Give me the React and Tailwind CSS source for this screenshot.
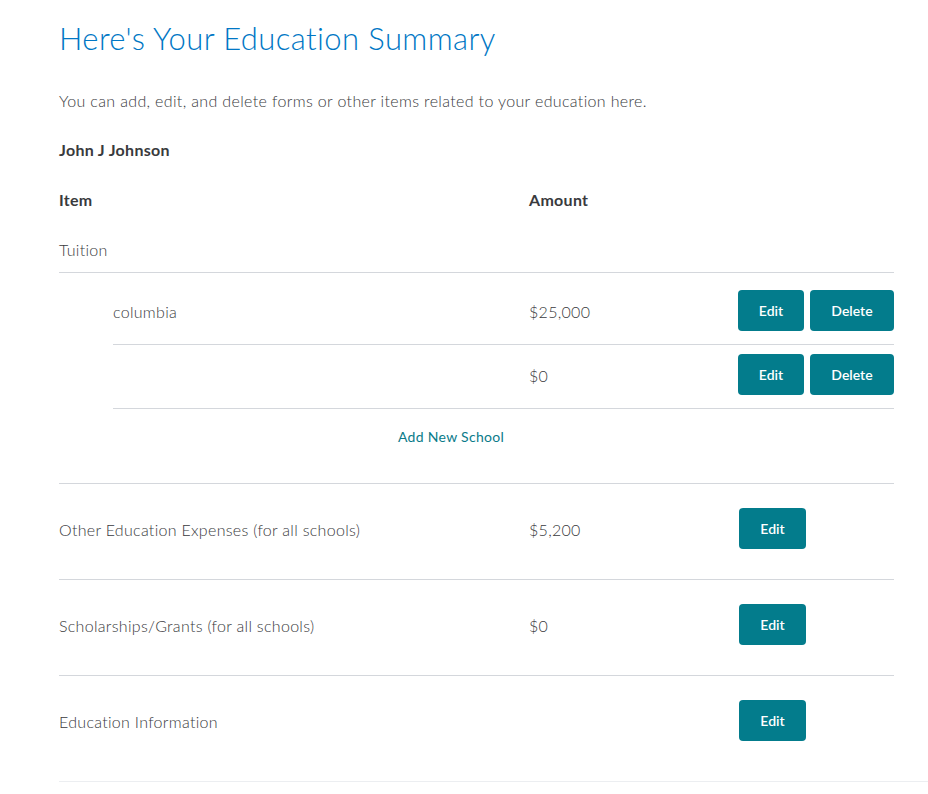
import React from 'react';

const schools = [
  { name: 'columbia', amount: '$25,000' },
  { name: '', amount: '$0' },
];

const others = [
  { label: 'Other Education Expenses (for all schools)', amount: '$5,200' },
  { label: 'Scholarships/Grants (for all schools)', amount: '$0' },
  { label: 'Education Information', amount: '' },
];

function Btn({ children, className = '' }) {
  return (
    <button className={`h-[41px] rounded-[4px] bg-[#037c8c] text-white text-[14px] font-semibold ${className}`}>
      {children}
    </button>
  );
}

export default function App() {
  return (
    <div className="min-h-[794px] bg-white text-[#393a3d] font-['Lato',sans-serif]">
      <div className="pl-[59px] pt-[18px]">
        {/* Header */}
        <h1 className="text-[31px] leading-[40px] font-light text-[#0077c5] tracking-[0.4px]">Here's Your Education Summary</h1>
        <p className="mt-[33px] text-[16px] leading-[20px] font-light tracking-[0.35px]">
          You can add, edit, and delete forms or other items related to your education here.
        </p>
        <div className="mt-[29px] text-[16px] leading-[20px] font-bold tracking-[0.3px]">John J Johnson</div>

        <div className="w-[835px]">
          {/* Column headings */}
          <div className="mt-[30px] grid grid-cols-[470px_1fr] text-[16px] leading-[20px] font-bold tracking-[0.3px]">
            <span>Item</span>
            <span>Amount</span>
          </div>

          {/* Tuition */}
          <div className="mt-[30px] pb-[12px] text-[16px] leading-[20px] font-light tracking-[0.3px]">Tuition</div>
          <div className="border-t border-[#d4d7dc]">
            <div className="pl-[54px] pt-[8px]">
              {schools.map((s, i) => (
                <div key={i} className="flex items-center border-b border-[#d4d7dc] pt-[9px] pb-[13px]">
                  <span className="w-[416px] pt-[2px] text-[16px] font-light tracking-[0.3px]">{s.name}</span>
                  <span className="flex-1 pt-[2px] text-[16px] font-light tracking-[0.3px]">{s.amount}</span>
                  <div className="flex gap-[6px]">
                    <Btn className="w-[66px]">Edit</Btn>
                    <Btn className="w-[84px]">Delete</Btn>
                  </div>
                </div>
              ))}
              <div className="pt-[18px] pb-[36px] pl-[285px] text-[14px] leading-[20px] tracking-[0.3px] text-[#0a7b8a]">
                Add New School
              </div>
            </div>
          </div>

          {/* Other items */}
          {others.map((o, i) => (
            <div
              key={i}
              className={`flex items-center border-t border-[#d4d7dc] pt-[24px] ${i === others.length - 1 ? 'pb-[40px]' : 'pb-[30px]'}`}
            >
              <span className="w-[470px] pt-[3px] text-[16px] font-light tracking-[0.3px]">{o.label}</span>
              <span className="w-[210px] pt-[3px] text-[16px] font-light tracking-[0.3px]">{o.amount}</span>
              <Btn className="w-[67px]">Edit</Btn>
            </div>
          ))}
        </div>
        <div className="border-t border-[#eceef1]" />
      </div>
    </div>
  );
}
